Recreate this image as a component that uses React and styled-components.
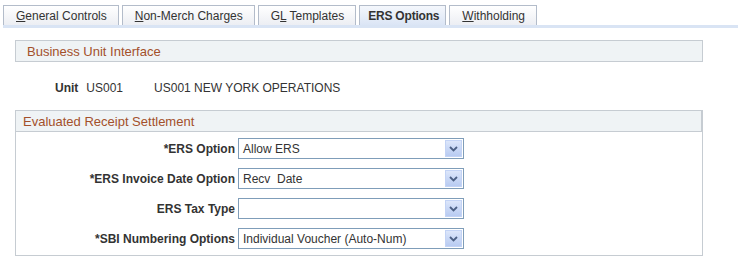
import styled, { createGlobalStyle } from 'styled-components';

const GlobalStyle = createGlobalStyle`
  body {
    margin: 0;
    background: #ffffff;
    font-family: "Liberation Sans", Arial, sans-serif;
    font-size: 12px;
    color: #333333;
  }
`;

const Page = styled.div`
  width: 743px;
  height: 265px;
  padding-top: 5px;
  box-sizing: border-box;
`;

const TabBar = styled.div`
  display: flex;
  gap: 3px;
  margin-left: 3px;
  width: 735px;
  border-bottom: 3px solid #d9e4f4;
`;

const Tab = styled.div`
  height: 20px;
  box-sizing: border-box;
  padding: ${p => (p.$active ? '0 6px 0 8px' : '0 11px 0 12px')};
  display: flex;
  align-items: center;
  border: 1px solid #b3bcca;
  border-bottom: none;
  background: ${p =>
    p.$active
      ? 'linear-gradient(#f4f7fc, #dbe5f5)'
      : 'linear-gradient(#ffffff, #eceef3)'};
  font-weight: ${p => (p.$active ? 'bold' : 'normal')};
  letter-spacing: ${p => (p.$active ? '-0.2px' : 'normal')};
  color: #333333;
  white-space: pre;
`;

const Section = styled.div`
  margin: 12px 0 0 15px;
  width: 688px;
  box-sizing: border-box;
`;

const GroupHeader = styled.div`
  height: 22px;
  box-sizing: border-box;
  border: 1px solid #c6ccd2;
  border-right-width: ${p => (p.$heavy ? 2 : 1)}px;
  background: #eff3f5;
  color: #a3502b;
  font-size: 13px;
  display: flex;
  align-items: center;
  padding-left: ${p => p.$pl}px;
`;

const UnitRow = styled.div`
  display: flex;
  align-items: center;
  height: 48px;
  padding: 3px 0 0 40px;
  box-sizing: border-box;
`;

const UnitLabel = styled.span`
  font-weight: bold;
  margin-right: 8px;
`;

const UnitValue = styled.span`
  margin-right: ${p => p.$mr || 0}px;
`;

const GroupBody = styled.div`
  border: 1px solid #c6ccd2;
  border-top: none;
  padding: 6px 0 6px;
  display: grid;
  grid-template-columns: 219px 226px;
  column-gap: 3px;
  row-gap: 9px;
  align-items: center;
`;

const FieldLabel = styled.div`
  text-align: right;
  font-weight: bold;
  color: #333333;
  white-space: nowrap;
`;

const SelectBox = styled.div`
  height: 21px;
  box-sizing: border-box;
  border: 1px solid #7f9db9;
  background: #ffffff;
  display: flex;
  align-items: center;
  justify-content: space-between;
  padding: 0 1px 0 4px;
  color: #333333;
  white-space: pre;
`;

const ArrowButton = styled.div`
  width: 17px;
  height: 17px;
  box-sizing: border-box;
  border: 1px solid #c3d3f5;
  background: linear-gradient(#dce6fa, #b8cbf2);
  display: flex;
  align-items: center;
  justify-content: center;
`;

const Dropdown = ({ value }) => (
  <SelectBox>
    <span>{value}</span>
    <ArrowButton>
      <svg width="9" height="6" viewBox="0 0 9 6">
        <path d="M1 1 L4.5 4.5 L8 1" fill="none" stroke="#4d6185" strokeWidth="1.8" />
      </svg>
    </ArrowButton>
  </SelectBox>
);

const fields = [
  { label: '*ERS Option', value: 'Allow ERS' },
  { label: '*ERS Invoice Date Option', value: 'Recv  Date' },
  { label: 'ERS Tax Type', value: '' },
  { label: '*SBI Numbering Options', value: 'Individual Voucher (Auto-Num)' },
];

const App = () => (
  <Page>
    <GlobalStyle />
    <TabBar>
      <Tab>
        <span><u>G</u>eneral Controls</span>
      </Tab>
      <Tab>
        <span><u>N</u>on-Merch Charges</span>
      </Tab>
      <Tab>
        <span>G<u>L</u> Templates</span>
      </Tab>
      <Tab $active>
        <span>ERS Options</span>
      </Tab>
      <Tab>
        <span><u>W</u>ithholding</span>
      </Tab>
    </TabBar>
    <Section>
      <GroupHeader $pl={11}>Business Unit Interface</GroupHeader>
      <UnitRow>
        <UnitLabel>Unit</UnitLabel>
        <UnitValue $mr={31}>US001</UnitValue>
        <UnitValue>US001 NEW YORK OPERATIONS</UnitValue>
      </UnitRow>
      <GroupHeader $pl={7} $heavy>
        Evaluated Receipt Settlement
      </GroupHeader>
      <GroupBody>
        {fields.map(f => [
          <FieldLabel key={f.label}>{f.label}</FieldLabel>,
          <Dropdown key={f.label + '-v'} value={f.value} />,
        ])}
      </GroupBody>
    </Section>
  </Page>
);

export default App;
